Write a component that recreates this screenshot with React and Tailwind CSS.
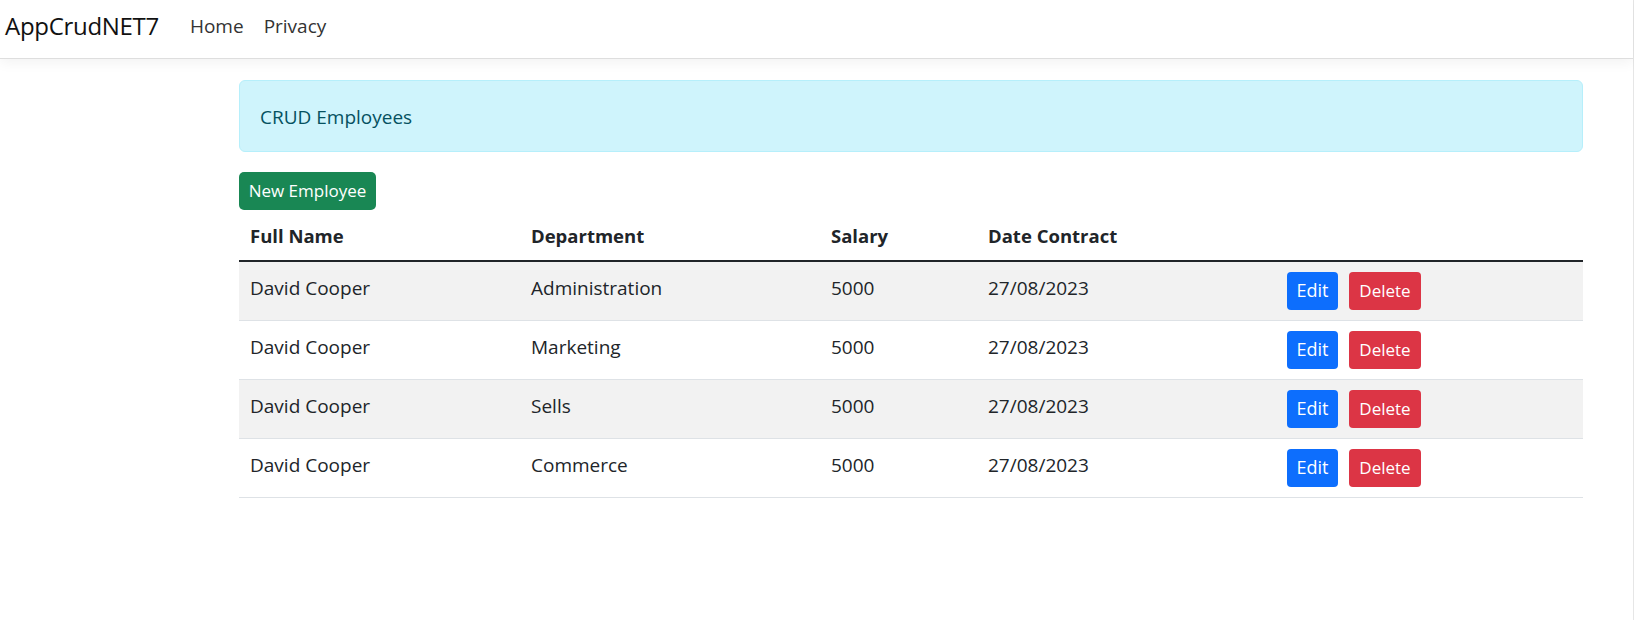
import React from "react";

const rows = [
  ["David Cooper", "Administration", "5000", "27/08/2023"],
  ["David Cooper", "Marketing", "5000", "27/08/2023"],
  ["David Cooper", "Sells", "5000", "27/08/2023"],
  ["David Cooper", "Commerce", "5000", "27/08/2023"],
];

export default function App() {
  return (
    <div
      className="min-h-[620px] bg-white text-[#212529] border-r border-[#e6e6e6]"
      style={{ fontFamily: '"Open Sans", "Noto Sans", sans-serif' }}
    >
      <nav className="h-[59px] flex items-center pb-[6px] border-b border-[#dedede] shadow-[0_4px_12px_rgba(0,0,0,0.05)] bg-white">
        <span className="ml-[5px] text-[24px] tracking-[-0.3px] text-[#111]">AppCrudNET7</span>
        <div className="ml-[31px] flex gap-[20px] text-[19px] text-[#333]">
          <span>Home</span>
          <span>Privacy</span>
        </div>
      </nav>

      <main className="pl-[239px] pt-[21px]">
        <div className="w-[1344px]">
          <div className="h-[72px] flex items-center px-[20px] pt-[2px] rounded-[6px] border border-[#b6effb] bg-[#cff4fc] text-[#055160] text-[19px]">
            CRUD Employees
          </div>

          <button className="mt-[20px] h-[38px] w-[137px] rounded-[5px] bg-[#198754] text-white text-[17px] flex items-center justify-center">
            New Employee
          </button>

          <table className="w-full border-collapse text-[19px]">
            <colgroup>
              <col className="w-[282px]" />
              <col className="w-[300px]" />
              <col className="w-[157px]" />
              <col className="w-[299px]" />
              <col />
            </colgroup>
            <thead>
              <tr className="h-[51px] border-b-2 border-[#212529] text-left text-[18.5px]">
                <th className="pl-[11px] pt-[2px] font-bold">Full Name</th>
                <th className="pl-[10px] pt-[2px] font-bold">Department</th>
                <th className="pl-[10px] pt-[2px] font-bold">Salary</th>
                <th className="pl-[10px] pt-[2px] font-bold">Date Contract</th>
                <th></th>
              </tr>
            </thead>
            <tbody>
              {rows.map((r, i) => (
                <tr
                  key={i}
                  className={`h-[59px] border-b border-[#dee2e6] ${i % 2 === 0 ? "bg-[#f2f2f2]" : "bg-white"}`}
                >
                  <td className="pl-[11px] pb-[5px]">{r[0]}</td>
                  <td className="pl-[10px] pb-[5px]">{r[1]}</td>
                  <td className="pl-[10px] pb-[5px]">{r[2]}</td>
                  <td className="pl-[10px] pb-[5px]">{r[3]}</td>
                  <td className="pl-[10px]">
                    <div className="flex gap-[11px]">
                      <button className="h-[38px] w-[51px] rounded-[4px] bg-[#0d6efd] text-white text-[18px]">Edit</button>
                      <button className="h-[38px] w-[72px] rounded-[4px] bg-[#dc3545] text-white text-[17px]">Delete</button>
                    </div>
                  </td>
                </tr>
              ))}
            </tbody>
          </table>
        </div>
      </main>
    </div>
  );
}
